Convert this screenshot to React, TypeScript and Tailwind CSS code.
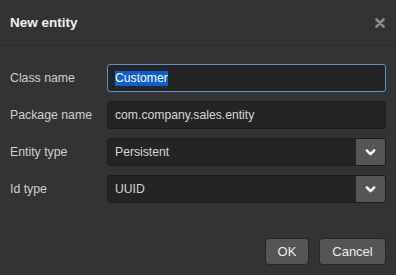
import React from 'react';

const font = { fontFamily: '"Liberation Sans", Arial, sans-serif' };

function Chevron() {
  return (
    <svg className="w-[13px] h-[13px]" viewBox="0 0 16 16" fill="none">
      <path d="M3.5 5.5l4.5 4.5 4.5-4.5" stroke="#f2f2f2" strokeWidth={3.2} strokeLinecap="round" strokeLinejoin="round" />
    </svg>
  );
}

function Row({ label, children }: { label: string; children: React.ReactNode }) {
  return (
    <div className="flex items-center h-[28px]">
      <label className="w-[97px] shrink-0 text-[12.3px] text-[#cfcfcf]">{label}</label>
      <div className="flex-1">{children}</div>
    </div>
  );
}

function Select({ value }: { value: string }) {
  return (
    <div className="flex h-[28px] rounded-[3px] border border-[#1d1d1d] bg-[#242424] overflow-hidden">
      <div className="flex-1 flex items-center px-[7px] text-[12.2px] text-[#d6d6d6]">{value}</div>
      <div className="w-[29px] flex items-center justify-center bg-[#555555]">
        <Chevron />
      </div>
    </div>
  );
}

export default function App() {
  return (
    <div className="w-[396px] h-[275px] bg-[#333333] flex flex-col" style={font}>
      {/* header */}
      <div className="h-[46px] flex items-center justify-between pl-[10px] pr-[11px] pt-[1px] border-b border-[#2a2a2a]">
        <h2 className="text-[13.5px] font-bold text-[#f0f0f0]">New entity</h2>
        <svg className="w-[10px] h-[10px]" viewBox="0 0 10 10">
          <path d="M1.5 1.5l7 7M8.5 1.5l-7 7" stroke="#8a8a8a" strokeWidth={2.6} strokeLinecap="round" />
        </svg>
      </div>

      {/* form */}
      <div className="flex flex-col gap-[9px] pt-[18px] pl-[10px] pr-[10px]">
        <Row label="Class name">
          <div className="h-[28px] flex items-center px-[7px] rounded-[3px] border border-[#5b8fd0] bg-[#242424] text-[12.2px]">
            <span className="bg-[#0a5fd1] text-white leading-[15px]">Customer</span>
          </div>
        </Row>
        <Row label="Package name">
          <div className="h-[28px] flex items-center px-[7px] rounded-[3px] border border-[#1d1d1d] bg-[#242424] text-[12.2px] text-[#d6d6d6]">
            com.company.sales.entity
          </div>
        </Row>
        <Row label="Entity type">
          <Select value="Persistent" />
        </Row>
        <Row label="Id type">
          <Select value="UUID" />
        </Row>
      </div>

      {/* footer */}
      <div className="flex justify-end gap-[10px] mt-auto mb-[10px] pr-[10px]">
        <button className="h-[27px] w-[44px] rounded-[4px] border border-[#262626] bg-[#555555] text-[13px] text-[#ececec]">
          OK
        </button>
        <button className="h-[27px] w-[67px] rounded-[4px] border border-[#262626] bg-[#555555] text-[13px] text-[#ececec]">
          Cancel
        </button>
      </div>
    </div>
  );
}
